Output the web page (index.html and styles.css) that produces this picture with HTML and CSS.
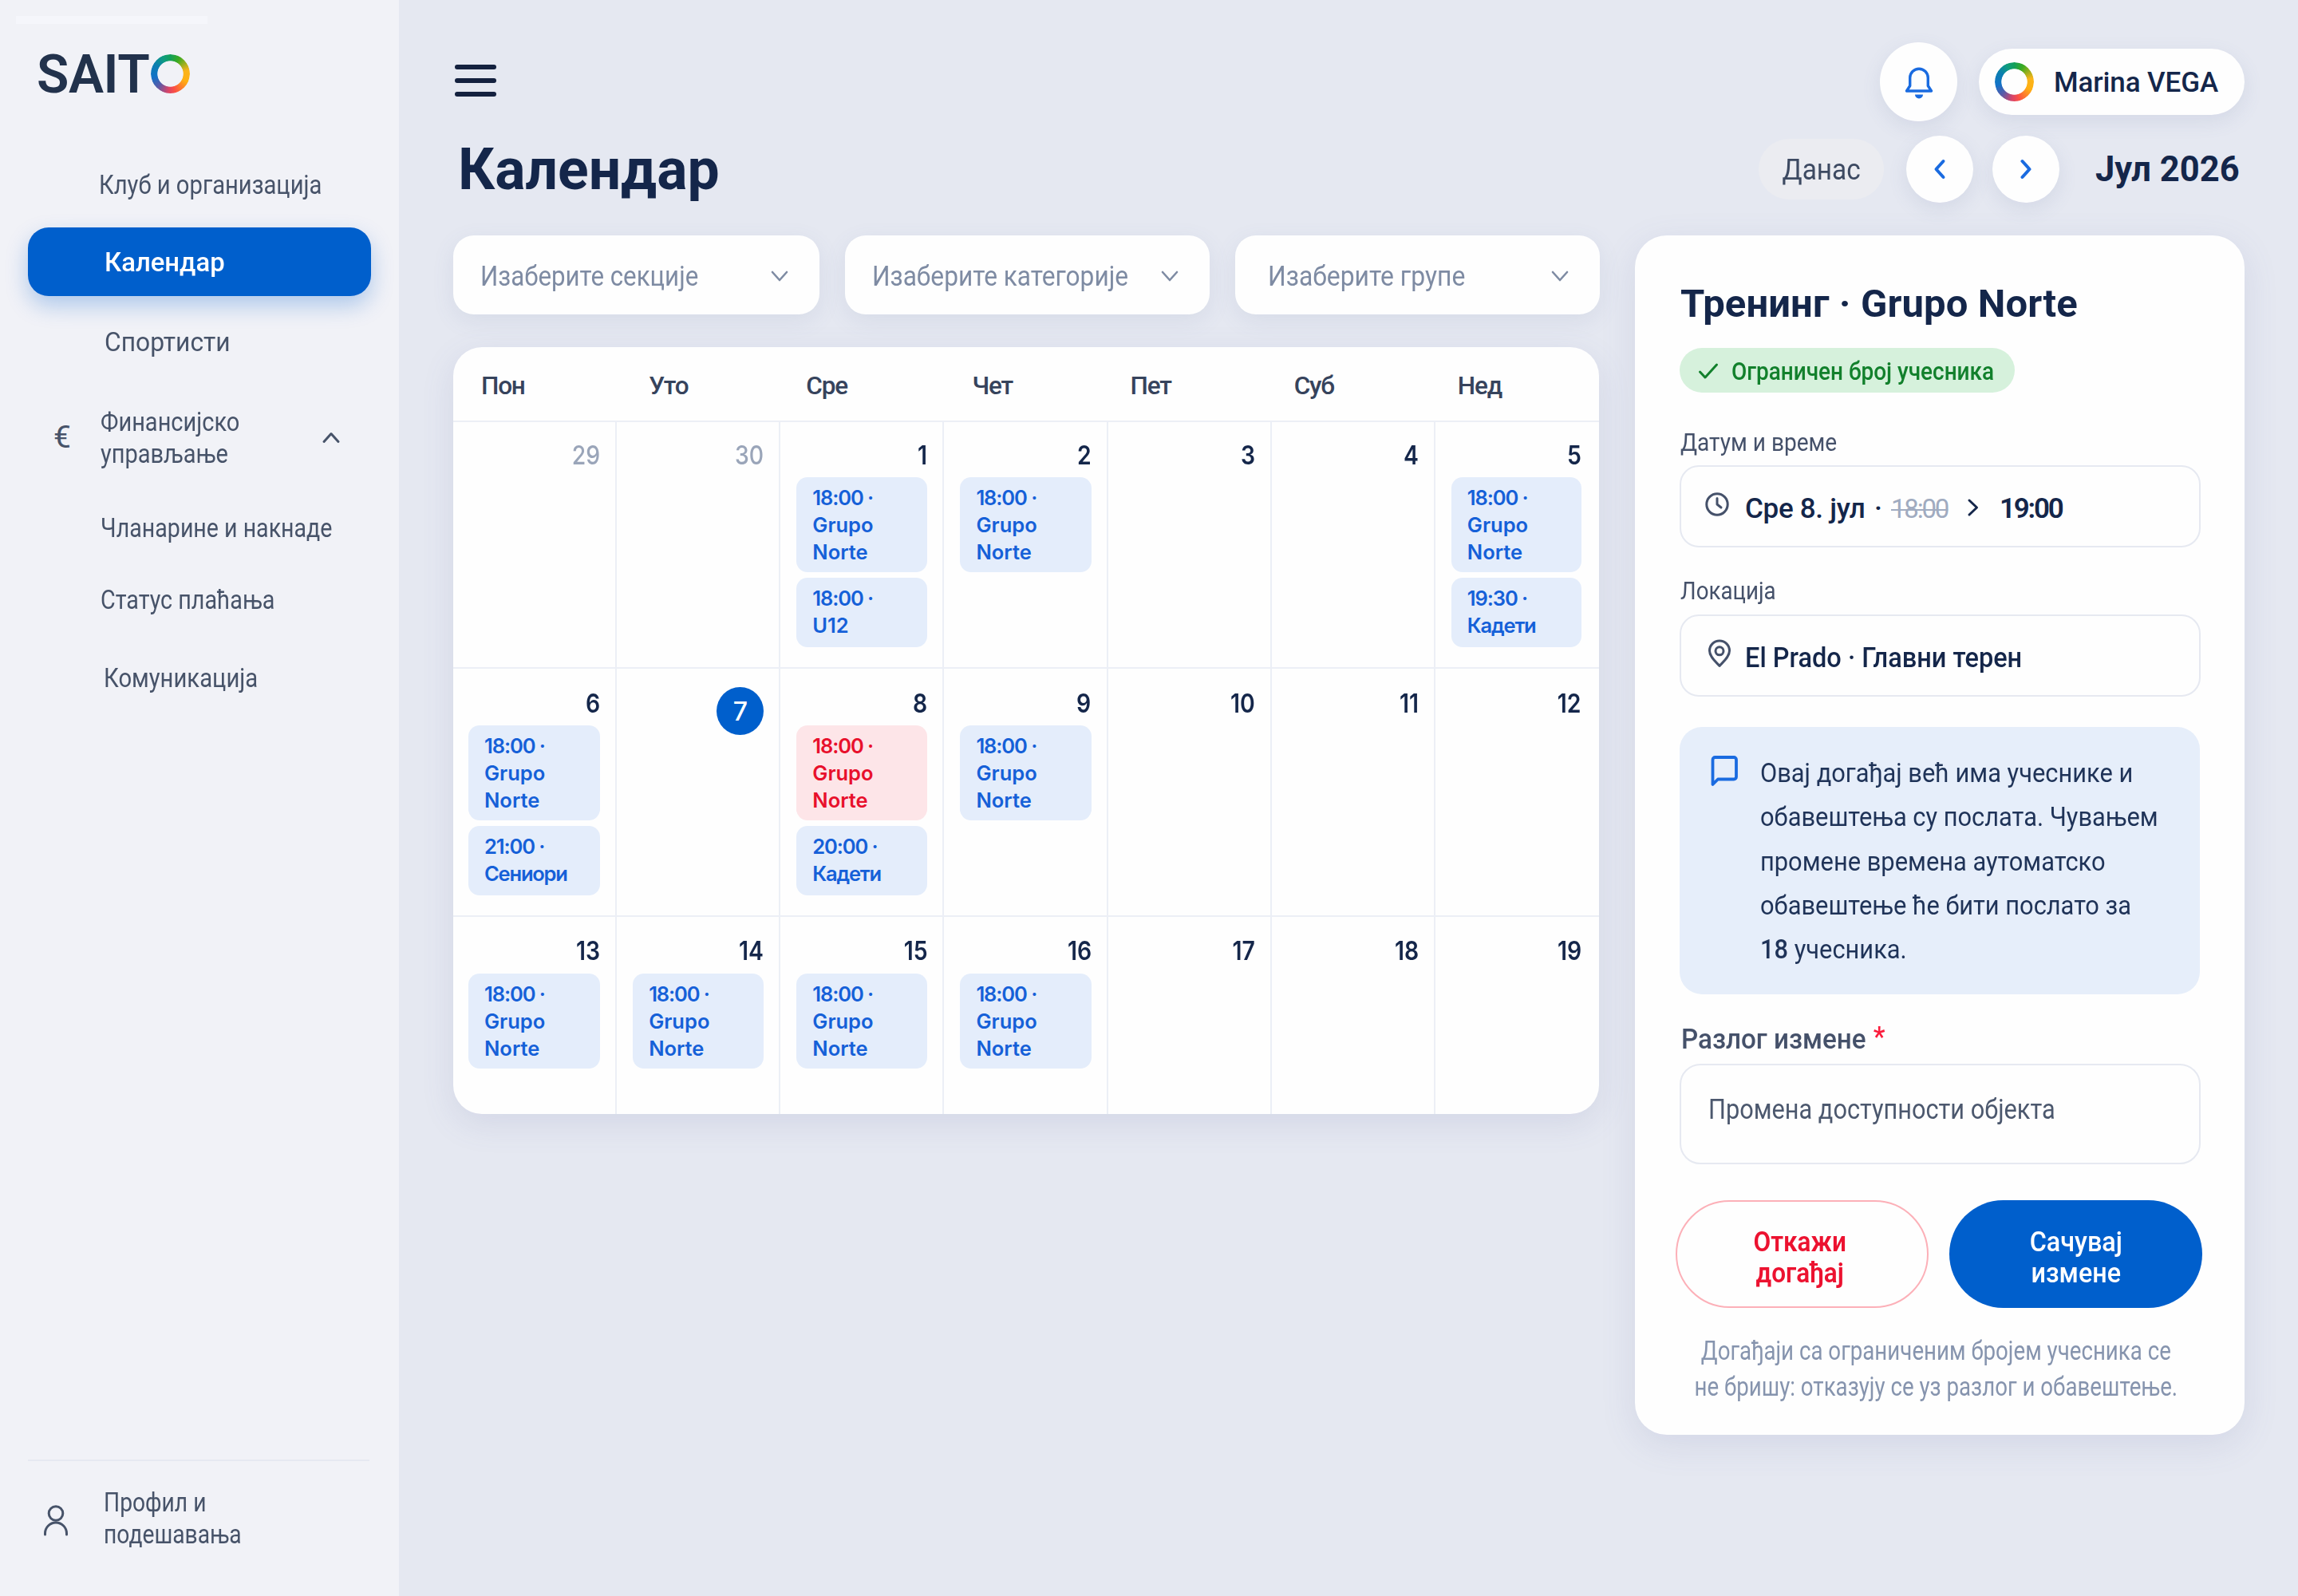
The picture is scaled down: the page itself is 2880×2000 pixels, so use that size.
FILE: index.html
```html
<!DOCTYPE html>
<html lang="sr">
<head>
<meta charset="utf-8">
<title>SAITO – Календар</title>
<link rel="stylesheet" href="styles.css">
</head>
<body>
<div class="app">
  <aside class="sidebar">
    <div class="strip"></div>
    <div class="logo">
      <span class="logo-text">SAIT</span><span class="ring logo-ring"></span>
    </div>
    <nav class="nav">
      <a class="nav-item nav-club"><span class="cond">Клуб и организација</span></a>
      <a class="nav-item nav-active"><span class="cond">Календар</span></a>
      <a class="nav-item nav-sport"><span class="cond">Спортисти</span></a>
      <a class="nav-item nav-finance">
        <span class="nav-icon">€</span>
        <span class="cond">Финансијско<br>управљање</span>
        <svg class="nav-chevron" width="24" height="16" viewBox="0 0 24 16"><path d="M3 13.5 12 3.5l9 10"/></svg>
      </a>
      <a class="nav-item nav-fees"><span class="cond">Чланарине и накнаде</span></a>
      <a class="nav-item nav-status"><span class="cond">Статус плаћања</span></a>
      <a class="nav-item nav-comm"><span class="cond">Комуникација</span></a>
    </nav>
    <div class="profile">
      <svg width="32" height="40" viewBox="0 0 32 40"><circle cx="16" cy="11.5" r="8.8"/><path d="M2.5 38v-1.500a13.500 13.500 0 0 1 27 0V38"/></svg>
      <span class="cond">Профил и<br>подешавања</span>
    </div>
  </aside>

  <main class="main">
    <header class="topbar">
      <div class="burger"><i></i><i></i><i></i></div>
      <div class="topbar-right">
        <div class="bell">
          <svg width="38" height="42" viewBox="0 0 38 42"><path d="M3.500 31H34.500L30.300 24.500V14.500a11.300 11.300 0 0 0-22.600 0V24.500Z"/><path class="clapper" d="M14 35.500h10a5 5 0 0 1-10 0Z"/></svg>
        </div>
        <div class="user"><span class="ring"></span><span class="user-name">Marina VEGA</span></div>
      </div>
    </header>

    <div class="title-row">
      <h1>Календар</h1>
      <div class="month-nav">
        <button class="today"><span class="cond">Данас</span></button>
        <button class="round"><svg width="20" height="32" viewBox="0 0 20 32"><path d="M14.500 6 5.500 16l9 10"/></svg></button>
        <button class="round"><svg width="20" height="32" viewBox="0 0 20 32"><path d="M5.500 6l9 10-9 10"/></svg></button>
        <span class="month">Јул 2026</span>
      </div>
    </div>

    <div class="content">
      <section class="left">
        <div class="filters">
          <div class="select"><span class="cond">Изаберите секције</span><svg width="22" height="16" viewBox="0 0 22 16"><path d="m2 3 9 10 9-10"/></svg></div>
          <div class="select"><span class="cond">Изаберите категорије</span><svg width="22" height="16" viewBox="0 0 22 16"><path d="m2 3 9 10 9-10"/></svg></div>
          <div class="select"><span class="cond">Изаберите групе</span><svg width="22" height="16" viewBox="0 0 22 16"><path d="m2 3 9 10 9-10"/></svg></div>
        </div>

        <div class="calendar">
          <div class="week head">
            <span>Пон</span><span>Уто</span><span>Сре</span><span>Чет</span><span>Пет</span><span>Суб</span><span>Нед</span>
          </div>
          <div class="week week-1">
            <div class="day muted"><b>29</b></div>
            <div class="day muted"><b>30</b></div>
            <div class="day"><b>1</b>
              <div class="event"><span class="time">18:00 ·</span><br>Grupo<br>Norte</div>
              <div class="event"><span class="time">18:00 ·</span><br>U12</div>
            </div>
            <div class="day"><b>2</b>
              <div class="event"><span class="time">18:00 ·</span><br>Grupo<br>Norte</div>
            </div>
            <div class="day"><b>3</b></div>
            <div class="day"><b>4</b></div>
            <div class="day"><b>5</b>
              <div class="event"><span class="time">18:00 ·</span><br>Grupo<br>Norte</div>
              <div class="event"><span class="time">19:30 ·</span><br><span class="cyr">Кадети</span></div>
            </div>
          </div>
          <div class="week week-2">
            <div class="day"><b>6</b>
              <div class="event"><span class="time">18:00 ·</span><br>Grupo<br>Norte</div>
              <div class="event"><span class="time">21:00 ·</span><br><span class="cyr">Сениори</span></div>
            </div>
            <div class="day"><em>7</em></div>
            <div class="day"><b>8</b>
              <div class="event alert"><span class="time">18:00 ·</span><br>Grupo<br>Norte</div>
              <div class="event"><span class="time">20:00 ·</span><br><span class="cyr">Кадети</span></div>
            </div>
            <div class="day"><b>9</b>
              <div class="event"><span class="time">18:00 ·</span><br>Grupo<br>Norte</div>
            </div>
            <div class="day"><b>10</b></div>
            <div class="day"><b>11</b></div>
            <div class="day"><b>12</b></div>
          </div>
          <div class="week week-3">
            <div class="day"><b>13</b>
              <div class="event"><span class="time">18:00 ·</span><br>Grupo<br>Norte</div>
            </div>
            <div class="day"><b>14</b>
              <div class="event"><span class="time">18:00 ·</span><br>Grupo<br>Norte</div>
            </div>
            <div class="day"><b>15</b>
              <div class="event"><span class="time">18:00 ·</span><br>Grupo<br>Norte</div>
            </div>
            <div class="day"><b>16</b>
              <div class="event"><span class="time">18:00 ·</span><br>Grupo<br>Norte</div>
            </div>
            <div class="day"><b>17</b></div>
            <div class="day"><b>18</b></div>
            <div class="day"><b>19</b></div>
          </div>
        </div>
      </section>

      <section class="panel">
        <h2>Тренинг · Grupo Norte</h2>
        <div class="badge">
          <svg width="26" height="22" viewBox="0 0 26 22"><path d="m2.500 12 6.500 7L23.500 3"/></svg>
          <span class="cond">Ограничен број учесника</span>
        </div>

        <div class="label label-date"><span class="cond">Датум и време</span></div>
        <div class="field">
          <svg class="clock" width="32" height="32" viewBox="0 0 32 32"><circle cx="16" cy="16" r="13.200"/><path d="M16 8.500V16l5 4"/></svg>
          <span class="date">Сре 8. јул</span><span class="dot">·</span><s>18:00</s>
          <svg class="arrow" width="16" height="24" viewBox="0 0 16 24"><path d="m3 3 9.500 9L3 21"/></svg>
          <strong>19:00</strong>
        </div>

        <div class="label label-place"><span class="cond">Локација</span></div>
        <div class="field">
          <svg class="pin" width="32" height="36" viewBox="0 0 32 36"><path d="M16 33.500C11 28 3.500 22 3.500 14.500a12.500 12.500 0 0 1 25 0C28.500 22 21 28 16 33.500Z"/><circle cx="16" cy="14.800" r="5"/></svg>
          <span class="cond place">El Prado · Главни терен</span>
        </div>

        <div class="notice">
          <svg width="36" height="40" viewBox="0 0 36 40"><path d="M3.500 37V6a3 3 0 0 1 3-3H30a3 3 0 0 1 3 3v21.500a3 3 0 0 1-3 3H10Z"/></svg>
          <p class="cond">Овај догађај већ има учеснике и<br>обавештења су послата. Чувањем<br>промене времена аутоматско<br>обавештење ће бити послато за<br><b>18</b> учесника.</p>
        </div>

        <div class="label label-reason"><span class="cond">Разлог измене <i>*</i></span></div>
        <div class="textarea"><span class="cond">Промена доступности објекта</span></div>

        <div class="actions">
          <button class="btn cancel"><span class="cond">Откажи<br>догађај</span></button>
          <button class="btn save"><span class="cond">Сачувај<br>измене</span></button>
        </div>
        <p class="hint"><span class="cond">Догађаји са ограниченим бројем учесника се<br>не бришу: отказују се уз разлог и обавештење.</span></p>
      </section>
    </div>
  </main>
</div>
</body>
</html>
```
FILE: styles.css
```css
* { box-sizing: border-box; }

body {
  margin: 0;
  width: 2880px;
  height: 2000px;
  overflow: hidden;
  background: #e5e8f1;
  color: #14264a;
  font-family: Roboto, "Liberation Sans", sans-serif;
  font-size: 34px;
  font-weight: 450;
}

h1, h2, p { margin: 0; }
button { border: 0; padding: 0; font: inherit; color: inherit; }
svg { flex: none; fill: none; stroke: currentColor; stroke-width: 3; stroke-linecap: round; stroke-linejoin: round; }

/* Narrowed text: each component sets its own ratio */
.cond {
  display: inline-block;
  white-space: nowrap;
  transform: scaleX(var(--cond, .86));
  transform-origin: 0 50%;
}

.app { display: flex; height: 2000px; }

/* Sidebar */
.sidebar {
  width: 500px;
  flex: none;
  display: flex;
  flex-direction: column;
  background: #f1f2f7;
  color: #475369;
}
.strip { width: 240px; height: 10px; margin: 20px 0 0 20px; background: #f5f6fb; }
.logo { display: flex; align-items: center; margin: 38px 0 0 46px; height: 49px; color: #22324c; }
.logo-text { width: 143px; font-size: 66px; font-weight: 600; line-height: 49px; letter-spacing: -.4px; padding-top: 1px; }
.ring {
  flex: none;
  width: 49px;
  height: 49px;
  border-radius: 50%;
  background: conic-gradient(from 0deg, #12a05a, #3aaa22 8%, #fbb41a 22%, #ffb012 32%, #fb4f45 46%, #d94468 52%, #5b5aa8 62%, #1272c8 72%, #0b7fb0 84%, #0f9c80 93%, #12a05a);
  -webkit-mask: radial-gradient(circle, transparent 15.800px, #000 16.600px);
  mask: radial-gradient(circle, transparent 15.800px, #000 16.600px);
}

.nav { display: flex; flex-direction: column; margin: 69px 35px 0; }
.nav-item { display: flex; align-items: center; height: 86px; padding-left: 90px; line-height: 40px; }
.nav-club { height: 90px; padding-left: 89px; --cond: .858; }
.nav-active {
  margin-top: 9px;
  padding-left: 96px;
  border-radius: 26px;
  background: #005fcc;
  color: #fff;
  font-weight: 500;
  box-shadow: 0 12px 28px rgba(0, 95, 204, .28);
  --cond: .967;
}
.nav-sport { margin-top: 14px; padding-left: 96px; --cond: .935; }
.nav-finance { height: 106px; margin-top: 24px; padding-left: 32px; --cond: .853; }
.nav-icon { width: 59px; font-size: 39px; }
.nav-chevron { margin-left: auto; margin-right: 38px; }
.nav-fees { margin-top: 17px; padding-left: 91px; --cond: .84; }
.nav-status { height: 78px; margin-top: 8px; padding-left: 91px; --cond: .845; }
.nav-comm { margin-top: 16px; padding-left: 95px; --cond: .86; }

.profile {
  display: flex;
  align-items: center;
  gap: 44px;
  height: 171px;
  margin: auto 37px 0 35px;
  padding: 0 0 28px 19px;
  border-top: 2px solid #e6e9f1;
  line-height: 40px;
  --cond: .83;
}
.profile svg { margin-top: 7px; }

/* Main */
.main {
  flex: 1;
  padding: 53px 67px 0 68px;
}
.topbar { display: flex; justify-content: space-between; align-items: center; height: 99px; }
.burger { display: flex; flex-direction: column; gap: 11px; margin: -3px 0 0 2px; }
.burger i { width: 52px; height: 6px; border-radius: 3px; background: #14213f; }
.topbar-right { display: flex; align-items: center; gap: 27px; }
.bell, .user, .round { background: #fefefe; box-shadow: 0 8px 24px rgba(90, 104, 160, .12); }
.bell { display: grid; place-items: center; width: 97px; height: 99px; border-radius: 50%; color: #1a6be0; }
.bell svg { margin-top: 3px; stroke-width: 3.400; }
.bell .clapper { fill: currentColor; stroke: none; }
.user {
  display: flex;
  align-items: center;
  gap: 25px;
  width: 333px;
  height: 83px;
  padding-left: 20px;
  border-radius: 42px;
  font-size: 35px;
  font-weight: 500;
}
.user-name { padding-top: 1px; letter-spacing: -.1px; }

.title-row { display: flex; justify-content: space-between; align-items: center; height: 84px; margin-top: 18px; padding: 0 4px 0 6px; }
h1 { padding-top: 2px; font-size: 71.5px; line-height: 84px; font-weight: 700; }
.month-nav { display: flex; align-items: center; }
.today {
  width: 157px;
  height: 76px;
  margin-right: 28px;
  border-radius: 38px;
  background: #ebecf1;
  color: #3d4a62;
  font-size: 36.5px;
  --cond: .915;
}
.today .cond { transform-origin: 50% 50%; }
.round { display: grid; place-items: center; width: 84px; height: 84px; margin-right: 24px; border-radius: 50%; color: #1a6be0; }
.round svg { stroke-width: 4; }
.month { width: 183px; margin-left: 21px; font-size: 43.5px; font-weight: 700; white-space: nowrap; }

.content { display: flex; align-items: flex-start; gap: 44px; margin-top: 41px; }
.left { width: 1437px; flex: none; }
.filters { display: grid; grid-template-columns: 459px 457px 457px; column-gap: 32px; }
.select {
  display: flex;
  align-items: center;
  justify-content: space-between;
  height: 99px;
  padding: 3px 39px 0 34px;
  border-radius: 26px;
  background: #fefefe;
  box-shadow: 0 8px 28px rgba(90, 104, 160, .1);
  color: #7e8ba3;
  font-size: 35px;
  --cond: .893;
}
.select:nth-child(2) { --cond: .904; }
.select:nth-child(3) { padding-left: 41px; --cond: .91; }
.select svg { stroke-width: 2.600; }

.calendar {
  width: 1436px;
  margin-top: 41px;
  border-radius: 36px;
  overflow: hidden;
  background: #fefefe;
  box-shadow: 0 12px 40px rgba(90, 104, 160, .13);
}
.week { display: grid; grid-template-columns: repeat(7, 1fr); }
.head { height: 94px; align-items: center; padding-top: 5px; border-bottom: 2px solid #eceff6; font-size: 31.500px; font-weight: 500; color: #36435c; letter-spacing: -1.2px; }
.head span { padding-left: 35px; }
.head span:nth-child(2) { padding-left: 40px; }
.head span:nth-child(3) { padding-left: 32px; }
.head span:nth-child(5) { padding-left: 28px; }
.head span:nth-child(6) { padding-left: 28px; }
.head span:nth-child(7) { padding-left: 28px; }
.week-1 { height: 309px; --top: 24px; --gap: 11px; }
.week-2 { height: 311px; --top: 26px; --gap: 11px; }
.week-3 { height: 247px; --top: 25px; --gap: 12px; }
.week-1, .week-2 { border-bottom: 2px solid #eceff6; }
.day {
  display: flex;
  flex-direction: column;
  padding: var(--top) 19px 0 20px;
  border-right: 2px solid #eceff6;
}
.day:nth-child(1) { padding-left: 19px; }
.day:last-child { border-right: 0; padding-right: 22px; }
.day b {
  align-self: flex-end;
  margin-bottom: var(--gap);
  font: 600 33px/34px Inter, "Liberation Sans", sans-serif;
  transform: scaleX(.86);
  transform-origin: 100% 50%;
}
.day em {
  align-self: flex-end;
  width: 59px;
  height: 60px;
  margin-top: -3px;
  border-radius: 50%;
  background: #005fcc;
  color: #fff;
  font: 500 32px/61px Inter, "Liberation Sans", sans-serif;
  text-align: center;
}
.day.muted b { color: #9aa5b9; font-weight: 550; }
.event {
  padding: 9px 0 8px 20px;
  border-radius: 14px;
  background: #e4edfb;
  color: #1560d8;
  font: 600 25.500px/34px Inter, "Liberation Sans", sans-serif;
}
.event + .event { margin-top: 7px; padding-bottom: 10px; }
.time { letter-spacing: -1.1px; }
.cyr { letter-spacing: -1.2px; }
.event.alert { background: #fde5e8; color: #e8102c; }

/* Event panel */
.panel {
  width: 764px;
  height: 1503px;
  padding: 55px 56px 0 56px;
  border-radius: 40px;
  background: #fefefe;
  box-shadow: 0 12px 44px rgba(90, 104, 160, .13);
}
h2 { padding: 1px 0 0 1px; font-size: 49px; line-height: 60px; font-weight: 700; letter-spacing: .1px; white-space: nowrap; }
.badge {
  display: flex;
  align-items: center;
  gap: 16px;
  width: 420px;
  height: 56px;
  margin-top: 25px;
  padding: 2px 0 0 23px;
  border-radius: 28px;
  background: #d6f1dc;
  color: #12802c;
  font-size: 31px;
  font-weight: 500;
  --cond: .902;
}
.badge .cond { flex: none; }
.label { height: 40px; padding-left: 1px; line-height: 42px; font-size: 31.500px; color: #45516a; }
.label-date { margin-top: 42px; --cond: .89; }
.label-place { margin-top: 34px; --cond: .88; }
.label-reason { margin-top: 36px; padding-left: 2px; font-size: 35px; font-weight: 500; --cond: .95; }
.label-reason i { margin-left: 1px; color: #fb1c3c; font-style: normal; vertical-align: 3px; line-height: 1; }
.field {
  display: flex;
  align-items: center;
  width: 653px;
  height: 103px;
  margin-top: 9px;
  padding-left: 29px;
  border: 2px solid #e6e9f1;
  border-radius: 24px;
  font-size: 35px;
}
.label-place + .field { margin-top: 10px; }
.field .date { width: 154px; margin: 5px 0 0 19px; font-weight: 500; letter-spacing: -.3px; white-space: nowrap; }
.dot { width: 26px; margin-top: 5px; text-align: center; font-weight: 500; }
.field s { width: 74px; margin: 5px 0 0 3px; font-size: 33px; letter-spacing: -2.200px; color: #a0abc0; text-decoration-thickness: 2px; }
.clock, .pin { color: #45516a; }
.clock { margin-top: -5px; }
.arrow { margin: 2px 25px 0 21px; }
.field strong { margin-top: 5px; font-size: 35px; font-weight: 600; letter-spacing: -2.200px; }
.pin { margin: -6px 0 0 3px; }
.place { margin: 5px 0 0 16px; font-weight: 500; --cond: .93; }

.notice {
  display: flex;
  align-items: flex-start;
  gap: 27px;
  width: 652px;
  height: 335px;
  margin-top: 38px;
  padding: 30px 0 0 38px;
  border-radius: 28px;
  background: #e6eefa;
  color: #1f3358;
  line-height: 55.300px;
  --cond: .907;
}
.notice svg { margin-top: 5px; color: #1a6be0; stroke-width: 3.800; }
.notice b { font-weight: 500; }
.textarea {
  width: 653px;
  height: 126px;
  margin-top: 11px;
  padding: 34px 0 0 34px;
  border: 2px solid #e6e9f1;
  border-radius: 26px;
  font-size: 35px;
  line-height: 44px;
  color: #4c586e;
  --cond: .878;
}
.actions { display: flex; gap: 26px; margin: 45px -5px 0; }
.btn { width: 317px; height: 135px; flex: none; padding-top: 8px; border-radius: 68px; font-size: 35px; line-height: 39px; }
.btn .cond { transform-origin: 50% 50%; }
.cancel { padding-right: 6px; border: 2.500px solid #fcb0b8; background: #fefefe; color: #ec1230; font-weight: 600; --cond: .9; }
.save { background: #005fcc; color: #fff; font-weight: 500; --cond: .925; }
.hint {
  display: flex;
  justify-content: center;
  margin: 32px 10px 0 0;
  font-size: 32.500px;
  line-height: 45px;
  text-align: center;
  color: #8694ae;
  --cond: .852;
}
.hint .cond { flex: none; transform-origin: 50% 50%; }
```
